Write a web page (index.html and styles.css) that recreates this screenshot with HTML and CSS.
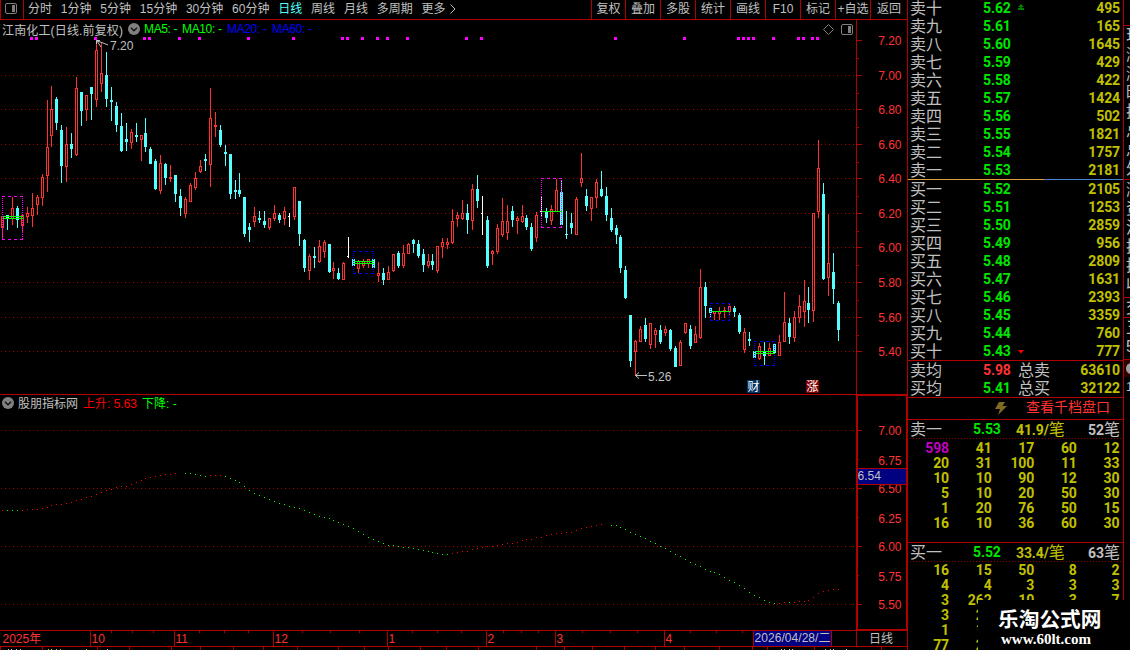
FILE: index.html
```html
<!DOCTYPE html>
<html lang="zh-CN">
<head>
    <meta charset="utf-8">
    <title>江南化工 日线</title>
    <link rel="stylesheet" href="styles.css">
</head>
<body>
    <div class="app">
        <div class="left">
            <div class="toolbar">
                <div class="toolbar-icon">
                    <svg width="12" height="11" viewBox="0 0 12 11"><rect x="0.5" y="0.5" width="11" height="10" rx="1.5" fill="none" stroke="#808080"/><rect x="7" y="2" width="3" height="7" fill="#808080"/></svg>
                </div>
                <div class="periods">
                    <span>分时</span><span>1分钟</span><span>5分钟</span><span>15分钟</span><span>30分钟</span><span>60分钟</span><span class="active">日线</span><span>周线</span><span>月线</span><span>多周期</span><span class="more">更多<svg width="6" height="10" viewBox="0 0 6 10"><path d="M0.5 0.5L5 5L0.5 9.5" fill="none" stroke="#c0c0c0"/></svg></span>
                </div>
                <div class="tools">
                    <span>复权</span><span>叠加</span><span>多股</span><span>统计</span><span>画线</span><span>F10</span><span>标记</span><span>+自选</span><span>返回</span>
                </div>
            </div>
            <div class="pane main-pane">
                <svg id="kline" width="907" height="375" viewBox="0 20 907 375"></svg>
                <div class="pane-title">
                    <span class="stock-name">江南化工(日线.前复权)</span>
                    <svg class="chevron" width="12" height="12" viewBox="0 0 12 12"><circle cx="6" cy="6" r="6" fill="#808080"/><path d="M3 4.8L6 7.8L9 4.8" fill="none" stroke="#111" stroke-width="1.4"/></svg>
                    <span class="ma ma5">MA5: -</span>
                    <span class="ma ma10">MA10: -</span>
                    <span class="ma blue">MA20: -</span>
                    <span class="ma blue">MA60: -</span>
                </div>
            </div>
            <div class="pane sub-pane">
                <svg id="indicator" width="907" height="235" viewBox="0 395 907 235"></svg>
                <div class="pane-title sub-title">
                    <svg class="chevron" width="12" height="12" viewBox="0 0 12 12"><circle cx="6" cy="6" r="6" fill="#808080"/><path d="M3 4.8L6 7.8L9 4.8" fill="none" stroke="#111" stroke-width="1.4"/></svg>
                    <span class="indicator-name">股朋指标网</span>
                    <span class="up">上升: 5.63</span>
                    <span class="down">下降: -</span>
                </div>
            </div>
            <svg id="timeline" width="907" height="20" viewBox="0 630 907 20"></svg>
        </div>

        <div class="quotes">
            <div class="book asks" id="asks"></div>
            <div class="divider"><i class="sell-part"></i><i class="buy-part"></i></div>
            <div class="book bids" id="bids"></div>
            <div class="averages">
                <div class="row"><span class="name">卖均</span><b class="price red">5.98</b><span class="total">总卖</span><b class="vol">63610</b></div>
                <div class="row"><span class="name">买均</span><b class="price">5.41</b><span class="total">总买</span><b class="vol">32122</b></div>
            </div>
            <div class="depth-link">
                <svg width="12" height="13" viewBox="0 0 12 13"><path d="M4 0H10L7.5 4H12L3 13L5 7H0Z" fill="#806a20"/></svg>
                <span>查看千档盘口</span>
            </div>
            <div class="queue">
                <div class="queue-head"><span class="name">卖一</span><b class="price">5.53</b><span class="avg"><b>41.9/</b>笔</span><span class="count"><b>52</b>笔</span></div>
                <div class="queue-grid" id="ask-queue"></div>
            </div>
            <div class="queue bid-queue">
                <div class="queue-head"><span class="name">买一</span><b class="price">5.52</b><span class="avg"><b>33.4/</b>笔</span><span class="count"><b>63</b>笔</span></div>
                <div class="queue-grid" id="bid-queue"></div>
            </div>
        </div>

        <div class="side">
            <div class="side-top"></div>
            <div class="side-list first"><span>现</span><span>涨</span><span>涨</span><span>昨</span><span>换</span><span>总</span><span>总</span><span>外</span></div>
            <div class="side-list second"><span>涨</span><span>资</span><span>流</span><span>换</span><span>换</span><span>收</span></div>
            <div class="side-list third"><span>交</span></div>
            <div class="side-list fourth"><span>五</span><span>5</span></div>
            <div class="side-icon"><i></i></div>
            <div class="side-list fifth"><span>1</span></div>
        </div>

        <div class="site-badge">
            <div class="site-name">乐淘公式网</div>
            <div class="site-url">www.60lt.com</div>
        </div>
    </div>
    <script src="chart.js"></script>
</body>
</html>
```
FILE: styles.css
```css
body {
    margin: 0;
    background: #000;
    color: #c0c0c0;
    font-family: "Liberation Sans", "Noto Sans CJK SC", sans-serif;
    font-size: 12px;
    overflow: hidden;
}

.app {
    position: relative;
    display: flex;
    width: 1130px;
    height: 650px;
    overflow: hidden;
}

.left {
    width: 907px;
    flex: none;
}

.left svg {
    display: block;
}

/* toolbar */
.toolbar {
    display: flex;
    height: 19px;
    border-bottom: 1px solid #b00000;
    line-height: 19px;
    white-space: nowrap;
}

.toolbar-icon {
    box-sizing: border-box;
    width: 24px;
    padding: 3px 0 0 4px;
    border-left: 1px solid #b00000;
    border-right: 1px solid #b00000;
}

.periods {
    display: flex;
    gap: 8.8px;
    width: 563px;
    padding-left: 4px;
}

.periods .active {
    color: #54ffff;
}

.more {
    display: flex;
    align-items: center;
    gap: 4px;
}

.more svg {
    margin-top: -2px;
}

.tools {
    display: grid;
    grid-template-columns: 34px repeat(7, 35px) 37px;
}

.tools span {
    border-left: 1px solid #b00000;
    text-align: center;
}

/* chart panes */
.pane {
    position: relative;
}

.pane-title {
    position: absolute;
    left: 2px;
    top: 0;
    height: 18px;
    display: flex;
    align-items: center;
    white-space: nowrap;
}

.stock-name {
    width: 126px;
    letter-spacing: 0.15px;
}

.chevron {
    margin-right: 4px;
}

.ma {
    width: 45px;
    letter-spacing: -0.35px;
}

.ma5 {
    width: 38px;
}

.ma5, .ma10, .down {
    color: #00ff00;
}

.blue {
    color: #0000ff;
}

.sub-title {
    top: -1px;
}

.sub-title span {
    margin-top: -2px;
}

.indicator-name {
    width: 65px;
}

.up {
    width: 59px;
    color: #ff0000;
}

svg text {
    font-size: 12px;
    fill: #ff3232;
}

svg .gray {
    fill: #c0c0c0;
}

svg .flag {
    fill: #fff;
}

.end {
    text-anchor: end;
}

/* order book */
.quotes {
    box-sizing: border-box;
    width: 217px;
    height: 650px;
    flex: none;
    border-left: 1px solid #b00000;
    border-right: 1px solid #b00000;
    font-size: 16px;
    overflow: hidden;
}

.quotes b {
    font-family: Roboto, "Liberation Sans", sans-serif;
    font-size: 14px;
    letter-spacing: -0.1px;
}

.row {
    display: grid;
    grid-template-columns: 73px 35px 45px 1fr;
    height: 18px;
    line-height: 18px;
    padding: 0 3px 0 2px;
    white-space: nowrap;
}

.row .name, .row .total {
    line-height: 19px;
}

.asks {
    height: 180px;
    margin-top: -1px;
}

.divider {
    display: flex;
    height: 1px;
}

.sell-part {
    width: 136px;
    background: #e0a040;
}

.buy-part {
    flex: 1;
    background: #4a80d0;
}

.bids {
    height: 180px;
}

.price {
    color: #00e600;
}

.red {
    color: #ff3232;
}

.vol {
    color: #c0c000;
    text-align: right;
}

.arrow {
    align-self: center;
    margin-top: -3px;
}

.averages {
    height: 36px;
    border-top: 1px solid #b00000;
    border-bottom: 1px solid #b00000;
}

.depth-link {
    display: flex;
    align-items: center;
    height: 21px;
    padding-left: 87px;
    color: #ff3232;
    font-size: 14px;
    line-height: 18px;
}

.depth-link span {
    margin: -3px 0 0 19px;
}

.queue {
    height: 122px;
    border-top: 1px solid #b00000;
}

.queue-head {
    display: grid;
    grid-template-columns: 63px 43px 50px 1fr;
    height: 19px;
    line-height: 19px;
    padding: 0 3px 0 2px;
    white-space: nowrap;
    background: repeating-linear-gradient(to right, #900000 0 1px, transparent 1px 3px) 2px 100% / 100% 1px no-repeat;
}

.avg {
    color: #c0c000;
}

.count {
    text-align: right;
}

.queue-grid {
    display: grid;
    grid-template-columns: 41px repeat(4, 42.6px);
    grid-auto-rows: 15px;
    line-height: 15px;
    padding-top: 2px;
    text-align: right;
    color: #c0c000;
}

.bid-queue .queue-grid {
    padding-top: 1px;
}

.queue-grid .big {
    color: #c000c0;
}

/* clipped info column at the right edge */
.side {
    width: 6px;
    flex: none;
    overflow: hidden;
    font-size: 16px;
}

.side-top {
    height: 25px;
}

.side-list {
    box-sizing: border-box;
    border-top: 1px solid #b00000;
    padding-left: 2px;
    overflow: hidden;
}

.side-list span {
    display: block;
    width: 16px;
    height: 19px;
    line-height: 19px;
}

.first {
    height: 154px;
}

.second {
    height: 118px;
}

.third {
    height: 20px;
}

.fourth {
    height: 42px;
}

.side-icon {
    height: 17px;
    background: #300000;
    border-top: 1px solid #b00000;
}

.side-icon i {
    display: block;
    width: 11px;
    height: 11px;
    margin: 3px 0 0 2px;
    border-radius: 50%;
    background: #a0a0a0;
}

.fifth {
    border-top: 0;
    font-size: 13px;
}

.site-badge {
    position: absolute;
    right: 0;
    bottom: 0;
    box-sizing: border-box;
    width: 152px;
    height: 50px;
    padding: 6px 0 0 20px;
    background: #000;
    color: #fff;
    font-weight: bold;
    white-space: nowrap;
}

.site-name {
    font-family: "Noto Sans CJK SC", sans-serif;
    font-size: 20.7px;
    line-height: 24px;
}

.site-url {
    padding-left: 3px;
    font-family: "Liberation Serif", serif;
    font-size: 15px;
    line-height: 18px;
}
```
FILE: chart.js
```javascript
var NS = 'http://www.w3.org/2000/svg';
var RED = '#ff3232', CYAN = '#54ffff', LINE = '#b00000', GRID = '#a00000';

function add(svg, name, attrs, text) {
    var el = document.createElementNS(NS, name);
    for (var key in attrs) el.setAttribute(key, attrs[key]);
    if (text !== undefined) el.textContent = text;
    svg.appendChild(el);
    return el;
}

function rect(svg, x, y, w, h, fill) {
    return add(svg, 'rect', {x: x, y: y, width: w, height: h, fill: fill, 'shape-rendering': 'crispEdges'});
}

function label(svg, x, y, text, cls) {
    return add(svg, 'text', {x: x, y: y, 'class': cls || ''}, text);
}

function dash(svg, x1, y1, x2, y2, color, pattern) {
    add(svg, 'line', {x1: x1, y1: y1, x2: x2, y2: y2, stroke: color, 'stroke-dasharray': pattern, 'shape-rendering': 'crispEdges'});
}

// x, high, body top, body bottom, low, type (r = up, c = down, w = flat)
var candles = `2 216 216 228 239 r|7 215 215 219 230 c|12 197 208 219 225 r|17 206 208 220 228 c|22 215 215 226 232 r
27 207 213 217 223 r|32 193 208 216 227 r|37 195 197 205 215 r|42 174 177 198 206 r|47 100 147 176 192 r
51 86 109 136 147 r|56 97 99 123 130 c|61 125 130 166 183 c|66 127 144 167 182 r|71 133 144 149 158 c
76 77 88 155 156 r|81 92 92 111 126 c|86 95 95 110 121 r|91 87 87 94 120 c|96 40 50 100 107 r
101 42 73 84 92 r|106 52 75 99 107 c|111 87 100 102 121 c|116 102 106 125 132 c|121 113 126 151 152 c
126 123 139 142 151 c|131 129 132 143 149 r|136 123 135 137 142 c|141 135 135 140 161 r|145 118 133 147 152 c
150 147 149 164 164 c|155 159 161 189 190 c|160 155 163 191 194 r|165 163 164 178 185 c|170 165 177 179 182 r
175 175 175 194 202 c|180 189 196 208 216 c|185 197 199 214 218 r|190 183 185 202 202 r|195 172 178 188 190 r
200 160 166 172 173 r|205 154 159 161 171 c|210 88 118 165 187 r|215 112 125 127 137 r|220 125 130 145 147 c
225 145 152 154 166 c|230 154 154 194 199 c|235 180 190 192 199 c|239 173 190 194 197 c|244 197 197 234 237 c
249 223 227 230 242 c|254 207 216 222 227 r|259 211 218 220 223 c|264 211 221 225 228 c|269 218 218 228 230 r
274 205 213 219 221 r|279 213 215 220 223 c|284 207 211 219 225 r|289 213 216 217 227 w|294 187 187 217 220 r
299 201 201 234 246 c|304 239 240 268 272 c|309 254 256 271 280 r|314 247 256 258 268 c|319 240 246 262 263 r
324 240 242 252 258 r|329 244 244 272 273 c|333 262 268 271 279 r|338 268 273 279 280 c|343 262 263 280 280 r
348 237 256 257 258 w|353 259 259 266 266 c|358 260 261 269 273 r|363 259 261 266 268 r|368 259 259 264 268 r
373 259 259 268 268 c|378 262 273 276 282 r|383 268 273 280 285 c|388 266 272 280 280 r|393 254 254 271 272 r
398 251 253 266 268 c|403 245 253 266 268 r|408 243 244 254 254 r|413 239 240 244 253 c|418 240 244 256 258 c
423 249 254 265 272 c|428 254 261 266 268 r|432 254 261 265 270 c|437 246 246 271 273 r|442 238 242 247 258 r
447 238 242 245 249 r|452 209 221 243 244 r|457 212 215 219 227 r|462 200 213 219 220 r|467 204 213 220 234 c
472 184 189 221 230 r|477 175 189 201 208 c|482 196 213 214 235 w|487 216 220 266 268 c|492 250 251 254 265 r
497 224 228 252 254 r|502 198 221 235 237 r|507 205 221 233 240 r|512 206 211 220 227 c|517 216 218 221 234 r
522 205 216 222 223 r|526 215 218 227 230 c|531 223 227 249 251 c|536 212 215 238 242 r|541 197 211 212 216 w
546 208 212 218 223 c|551 205 209 221 225 r|556 179 190 212 212 r|561 180 192 225 225 c|566 211 234 235 239 c
571 213 223 228 234 c|576 197 199 235 235 r|581 153 178 183 187 r|586 189 196 206 211 c|591 197 197 209 221 r
596 179 182 198 208 r|601 171 189 196 197 c|606 187 196 215 221 c|611 208 218 230 232 c|616 225 228 235 244 c
620 235 237 268 273 c|625 266 270 298 299 c|630 315 315 361 367 c|635 340 341 352 375 r|640 326 329 342 342 r
645 318 325 339 342 c|650 323 323 345 349 r|655 328 330 335 348 r|660 325 330 342 344 c|665 326 329 333 336 r
670 329 330 349 351 c|675 346 348 367 367 c|680 340 342 366 366 r|685 323 323 333 334 r|690 325 329 346 349 c
695 326 334 343 343 r|700 269 287 338 339 r|705 282 287 306 318 c|710 308 308 313 318 c|714 311 311 314 320 r
719 307 311 314 320 r|724 307 310 312 318 r|729 304 306 312 315 r|734 306 308 312 317 c|739 313 315 332 334 c
744 328 332 350 353 r|749 332 339 341 346 c|754 351 351 358 358 c|759 343 346 359 360 r|764 342 351 356 365 c
769 343 348 356 356 r|774 344 344 353 353 c|779 335 342 356 356 r|784 292 322 342 342 r|789 318 323 337 344 c
794 311 317 338 342 r|799 295 306 318 323 r|804 280 301 312 327 r|808 287 303 310 323 c|813 213 213 311 322 r
818 140 168 212 218 r|823 183 194 279 280 c|828 214 263 278 296 r|833 253 272 289 304 c|838 301 303 330 341 c`;

var kline = document.getElementById('kline');

[75, 109, 144, 178, 213, 247, 282, 317, 351].forEach(function (y) {
    dash(kline, 1, y + 0.5, 855, y + 0.5, GRID, '1 3');
});

candles.split(/[|\n]/).forEach(function (row) {
    var c = row.split(' '), x = +c[0], high = +c[1], top = +c[2], bottom = +c[3], low = +c[4];
    if (c[5] === 'w') {
        rect(kline, x, high, 1, low - high, '#fff');
        rect(kline, x - 1, top, 1, 1, '#fff');
        return;
    }
    var color = c[5] === 'r' ? RED : CYAN;
    rect(kline, x, high, 1, low - high, color);
    rect(kline, x - 1, top, 3, bottom - top, color);
    if (c[5] === 'r' && bottom - top > 2) rect(kline, x, top + 1, 1, bottom - top - 2, '#000');
});

// signal markers along the top
[30, 35, 94, 143, 148, 178, 198, 247, 292, 341, 346, 361, 376, 386, 406, 465, 480, 614, 683, 737, 742, 747, 752, 772, 797, 802, 811, 816].forEach(function (x) {
    rect(kline, x, 37, 3, 3, '#ff00ff');
});

// consolidation boxes: left, top, right, bottom, colour, middle lines
[
    [2, 196, 22, 239, '#ff00ff', [216, 218]],
    [353, 251, 373, 273, '#0000ff', [261, 263]],
    [541, 178, 561, 227, '#ff00ff', [211]],
    [710, 303, 729, 320, '#0000ff', [311]],
    [754, 341, 774, 365, '#0000ff', [351, 353]]
].forEach(function (b) {
    dash(kline, b[0], b[1] + 0.5, b[2] + 1, b[1] + 0.5, b[4], '3 3');
    dash(kline, b[0], b[3] + 0.5, b[2] + 1, b[3] + 0.5, b[4], '3 3');
    dash(kline, b[0] + 0.5, b[1], b[0] + 0.5, b[3], b[4], '1 1');
    dash(kline, b[2] + 0.5, b[1], b[2] + 0.5, b[3], b[4], '1 1');
    b[5].forEach(function (y) {
        rect(kline, b[0] + 1, y, b[2] - b[0], 1, '#00ff00');
    });
});

add(kline, 'path', {d: 'M108 45L103 43L96 40.5M100 40.5H96.5V44M97 41L101 47', fill: 'none', stroke: '#c0c0c0'});
label(kline, 110, 50, '7.20', 'gray');
add(kline, 'path', {d: 'M647 375.5H635M639 372.5L635.5 375.5L639 378.5', fill: 'none', stroke: '#c0c0c0'});
label(kline, 648, 381, '5.26', 'gray');

rect(kline, 747, 380, 13, 13, '#003366');
label(kline, 747.5, 391, '财', 'flag');
rect(kline, 806, 380, 13, 13, '#800000');
label(kline, 806.5, 391, '涨', 'flag');

add(kline, 'path', {d: 'M828.5 24.5L833.5 29.5L828.5 34.5L823.5 29.5Z', fill: 'none', stroke: '#808080'});
add(kline, 'rect', {x: 841.5, y: 24.5, width: 11, height: 10, rx: 1.5, fill: 'none', stroke: '#808080'});
rect(kline, 848, 26, 3, 7, '#808080');

// price axis
rect(kline, 856, 20, 1, 375, LINE);
rect(kline, 0, 394, 907, 1, LINE);
[[40, '7.20'], [75, '7.00'], [109, '6.80'], [144, '6.60'], [178, '6.40'], [213, '6.20'], [247, '6.00'], [282, '5.80'], [317, '5.60'], [351, '5.40']].forEach(function (t) {
    rect(kline, 857, t[0], 5, 1, LINE);
    if (t[0] < 351) rect(kline, 857, t[0] + 18, 2, 1, LINE);
    label(kline, 901.5, t[0] + 5, t[1], 'end');
});

var indicator = document.getElementById('indicator');

[430, 488, 546, 604].forEach(function (y) {
    dash(indicator, 1, y + 0.5, 855, y + 0.5, GRID, '1 3');
});

// x,y of the indicator dots, grouped in runs of rising (r) and falling (g)
var runs = [
    ['r', '2,510'],
    ['g', '7,510 12,510 17,510'],
    ['r', '22,510 27,509 32,509 37,509 42,508 47,507 51,505 56,504 61,504 66,503 71,502 76,500 81,499 86,497 91,496 96,494 101,492 106,490 111,489 116,487 121,486 126,486 131,484 136,482 141,480 145,478 150,477 155,476 160,475 165,474 170,474 175,473'],
    ['g', '185,473 190,473 195,474 200,475 205,476'],
    ['r', '210,475 215,475 220,475'],
    ['g', '225,476 230,478 235,480 239,482 244,486 249,490 254,493 259,495 264,497 269,499 274,501 279,503 284,504 289,506 294,507 299,508 304,510 309,512 314,514 319,516 324,517 329,518 333,520 338,522 343,524 348,526 353,528 358,531 363,534 368,537 373,539 378,541 383,543 388,545 393,545 398,546 403,547 408,547 413,548 418,549 423,550 428,551 432,552 437,553 442,554 447,554'],
    ['r', '452,553 457,552 462,551 467,551 472,549 477,548 482,547 487,546 492,546 497,545 502,544 507,543 512,543 517,542 522,540 526,539 531,539 536,537 541,537 546,535 551,534 556,533 561,533 566,532 571,532 576,530 581,528 586,527 591,526 596,525 601,524'],
    ['g', '611,525 616,525 620,527 625,529 630,532 635,534 640,536 645,538 650,541 655,543 660,546 665,548 670,551 675,554 680,556 685,559 690,562 695,564 700,566 705,569 710,571 714,572 719,574 724,577 729,580 734,582 739,585 744,588 749,592 754,595 759,597 764,600 769,602 774,603'],
    ['r', '779,603 784,602'],
    ['g', '789,602'],
    ['r', '794,602 799,601 804,601 808,600 813,597 818,593 823,591 828,590 833,589 838,589']
];
runs.forEach(function (run) {
    run[1].split(' ').forEach(function (p) {
        p = p.split(',');
        rect(indicator, p[0], p[1], 1, 1, run[0] === 'r' ? '#ff0000' : '#00ff00');
    });
});

[[430, '7.00'], [460, '6.75'], [488, '6.50'], [518, '6.25'], [546, '6.00'], [576, '5.75'], [604, '5.50']].forEach(function (t, i) {
    rect(indicator, 858, i % 2 ? t[0] - 1 : t[0], i % 2 ? 1 : 4, 1, LINE);
    label(indicator, 901.5, t[0] + 5, t[1], 'end');
});
rect(indicator, 857, 468, 50, 17, LINE);
rect(indicator, 858, 469, 48, 15, '#000080');
label(indicator, 857.5, 480, '6.54', 'gray');
rect(indicator, 856, 395, 2, 235, LINE);
rect(indicator, 906, 395, 1, 235, LINE);
rect(indicator, 856, 395, 51, 1, LINE);
rect(indicator, 856, 629, 51, 1, LINE);

var timeline = document.getElementById('timeline');

rect(timeline, 0, 630, 907, 1, LINE);
rect(timeline, 0, 646, 907, 1, LINE);
[[90, '10'], [174, '11'], [273, '12'], [387, '1'], [486, '2'], [555, '3'], [664, '4']].forEach(function (m) {
    rect(timeline, m[0], 630, 1, 16, LINE);
    label(timeline, m[0] + 1.5, 643, m[1]);
});
label(timeline, 2.5, 643, '2025年');
[111, 132, 153, 199, 224, 248, 302, 330, 359, 412, 437, 461, 503, 521, 538, 582, 610, 637, 690, 716, 742].forEach(function (x) {
    rect(timeline, x, 631, 1, 2, LINE);
});
[0, 42, 97, 129, 171, 200, 233, 263, 297, 338, 364, 388, 420, 446, 478, 536, 564, 592, 624, 655, 684, 719, 752, 767, 814, 881].forEach(function (x) {
    rect(timeline, x, 647, 1, 3, LINE);
});
// tops of the row below
[8, 11, 16, 20, 107, 781, 784, 789, 792, 825, 830, 833, 846].forEach(function (x) {
    rect(timeline, x, 649, 1, 1, '#c0c0c0');
});
[48, 51, 56, 60, 86].forEach(function (x) {
    rect(timeline, x, 649, 1, 1, '#c0c000');
});
rect(timeline, 753, 630, 79, 17, LINE);
rect(timeline, 754, 631, 77, 15, '#000080');
label(timeline, 754.5, 642, '2026/04/28/二', 'gray').setAttribute('textLength', 76);
rect(timeline, 856, 630, 1, 16, LINE);
label(timeline, 869, 642.5, '日线', 'gray');

function book(id, names, rows) {
    document.getElementById(id).innerHTML = rows.map(function (r, i) {
        var arrow = r[2] ? '<svg class="arrow" width="6" height="7" viewBox="0 0 6 7"><path fill="' + (r[2] === 'up' ? '#008000' : '#ff0000') + '" d="' + (r[2] === 'up' ? 'M3 0L6 3H4V4H6V6H0V4H2V3H0Z' : 'M0 3H6L3 6.5Z') + '"/></svg>' : '<i></i>';
        return '<div class="row"><span class="name">' + names[0] + names[1][i] + '</span><b class="price">' + r[0] + '</b>' + arrow + '<b class="vol">' + r[1] + '</b></div>';
    }).join('');
}

book('asks', ['卖', '十九八七六五四三二一'], [['5.62', 495, 'up'], ['5.61', 165], ['5.60', 1645], ['5.59', 429], ['5.58', 422], ['5.57', 1424], ['5.56', 502], ['5.55', 1821], ['5.54', 1757], ['5.53', 2181]]);
book('bids', ['买', '一二三四五六七八九十'], [['5.52', 2105], ['5.51', 1253], ['5.50', 2859], ['5.49', 956], ['5.48', 2809], ['5.47', 1631], ['5.46', 2393], ['5.45', 3359], ['5.44', 760], ['5.43', 777, 'down']]);

function queue(id, values) {
    document.getElementById(id).innerHTML = values.map(function (v) {
        return '<b' + (v > 500 ? ' class="big"' : '') + '>' + v + '</b>';
    }).join('');
}

queue('ask-queue', [598, 41, 17, 60, 12, 20, 31, 100, 11, 33, 10, 10, 90, 12, 30, 5, 10, 20, 50, 30, 1, 20, 76, 50, 15, 16, 10, 36, 60, 30]);
queue('bid-queue', [16, 15, 50, 8, 2, 4, 4, 3, 3, 3, 3, 262, 10, 3, 7, 3, 20, '', '', '', 1, 10, '', '', '', 77, 20]);
```
